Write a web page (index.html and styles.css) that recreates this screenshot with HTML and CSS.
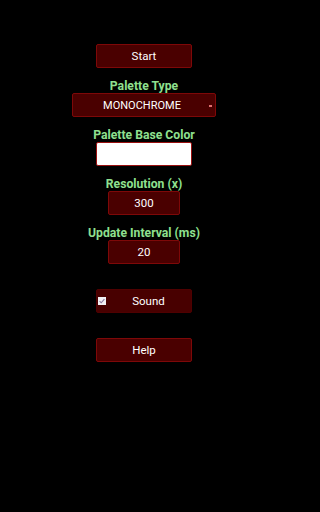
FILE: index.html
```html
<!DOCTYPE html>
<html>
<head>
<meta charset="utf-8">
<link rel="stylesheet" href="styles.css">
</head>
<body>
<main class="panel">
  <button class="btn btn-start">Start</button>
  <label class="lbl">Palette Type</label>
  <div class="select">
    <span class="select-text">MONOCHROME</span>
    <span class="select-arrow"></span>
  </div>
  <label class="lbl">Palette Base Color</label>
  <div class="color"></div>
  <label class="lbl">Resolution (x)</label>
  <div class="num">300</div>
  <label class="lbl">Update Interval (ms)</label>
  <div class="num">20</div>
  <div class="btn btn-sound">
    <span class="check">
      <svg viewBox="0 0 8 8" width="8" height="8"><path d="M1.6 4.2 L3.2 5.8 L6.4 2.2" fill="none" stroke="#8a7aa0" stroke-width="1.1"/></svg>
    </span>
    <span class="sound-text">Sound</span>
  </div>
  <button class="btn btn-help">Help</button>
</main>
</body>
</html>
```

FILE: styles.css
```css
html, body {
  margin: 0;
  padding: 0;
  background: #000;
  width: 288px;
  height: 512px;
  overflow: hidden;
}
.panel {
  display: flex;
  flex-direction: column;
  align-items: center;
  padding-top: 44px;
  font-family: Roboto, "Liberation Sans", sans-serif;
}
.btn, .select, .num {
  box-sizing: border-box;
  height: 24px;
  background: #4a0000;
  border: 1px solid #7e0808;
  border-radius: 2px;
  color: #fff;
  font-family: Roboto, "Liberation Sans", sans-serif;
  font-size: 11.5px;
  display: flex;
  align-items: center;
  justify-content: center;
  padding: 0;
}
.btn {
  width: 96px;
}
.btn-start { margin-bottom: 11px; }
.lbl {
  height: 14px;
  line-height: 14px;
  color: #8fe08f;
  font-weight: bold;
  font-size: 12.2px;
  text-align: center;
}
.select {
  width: 144px;
  position: relative;
  margin-bottom: 11px;
}
.select-text { font-size: 11px; margin-right: 4px; }
.select-arrow {
  position: absolute;
  right: 3px;
  top: 11px;
  width: 3px;
  height: 2px;
  background: #e07070;
}
.color {
  box-sizing: border-box;
  width: 96px;
  height: 24px;
  background: #fff;
  border: 1px solid #9a1010;
  border-radius: 2px;
  margin-bottom: 11px;
}
.num {
  width: 72px;
  margin-bottom: 11px;
}
.num:last-of-type { margin-bottom: 0; }
.btn-sound {
  margin-top: 14px;
  justify-content: flex-start;
  border-color: #4f0000;
  background: #480000;
}
.check {
  width: 8px;
  height: 8px;
  background: #f2f0f4;
  margin-left: 1px;
  display: flex;
}
.sound-text {
  flex: 1;
  text-align: center;
}
.btn-help { margin-top: 25px; }
```
